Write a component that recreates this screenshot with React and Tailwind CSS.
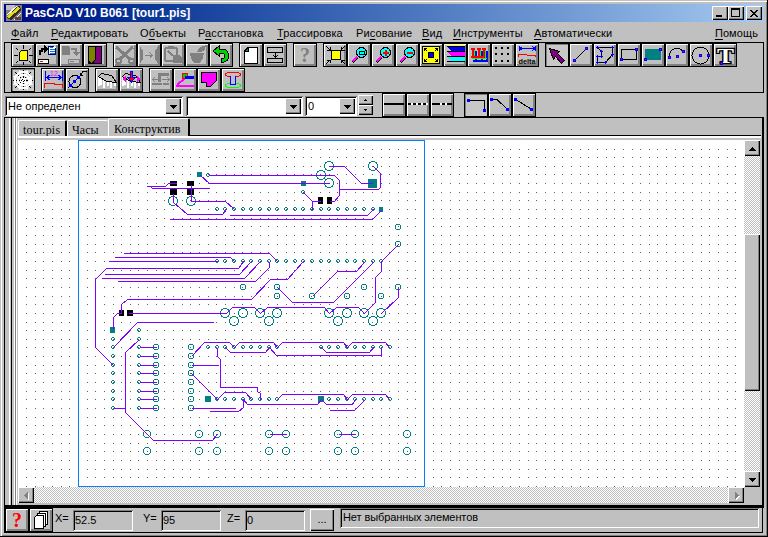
import React from "react";

const raised =
  "bg-[#c0c0c0] shadow-[inset_1px_1px_0_#fff,inset_-1px_-1px_0_#000,inset_-2px_-2px_0_#808080]";
const sunken =
  "shadow-[inset_1px_1px_0_#808080,inset_-1px_-1px_0_#fff,inset_2px_2px_0_#000]";

const K = "#000";
const G = "#808080";
const B = "#0000ff";

function Tool({ children, down }) {
  return (
    <div
      className={
        down
          ? "h-6 w-6 shrink-0 border border-black bg-[#c8c8c8] shadow-[inset_1px_1px_0_#808080]"
          : "h-6 w-6 shrink-0 border border-black bg-[#c0c0c0] shadow-[inset_1px_1px_0_#fff,inset_-1px_-1px_0_#808080,inset_-2px_-2px_0_#808080]"
      }
    >
      <svg width="22" height="22" viewBox="1 1 22 22" fill="none" stroke={K} shapeRendering="crispEdges" className="block overflow-visible">
        {children}
      </svg>
    </div>
  );
}

const Node = ({ x, y, red }) => (
  <g stroke="none">
    <rect x={x - 1} y={y - 1} width="3" height="3" fill={B} />
    {red && <rect x={x} y={y} width="1" height="1" fill="#f00" />}
  </g>
);

const Lens = ({ children }) => (
  <g>
    <path d="M5.5 19L10.5 14" stroke={K} strokeWidth="3.5" />
    <path d="M5.5 18.5L10 14" stroke="#f0f" strokeWidth="2" />
    <circle cx="14.5" cy="9.5" r="5" fill="#0ff" />
    {children}
  </g>
);

const fileTools = [
  <g>
    <path d="M12.5 2V6M12.5 19V22M3 12.5H7M18 12.5H22M5 5L7 7M20 5L18 7M5 20L7 18M20 20L18 18" />
    <path d="M10.5 7.5H16.5V17.5H8.5V9.5Z" fill="#ff0" />
  </g>,
  <g>
    <path d="M5 12V8H7V6H10" strokeWidth="2" />
    <path d="M9 2L13 6L9 10Z" fill={K} stroke="none" />
    <path d="M13 3H19L21 5V12H13Z" fill="#fff" stroke="none" />
    <path d="M15 4.5H18M15 6.5H20M15 8.5H20M15 10.5H20" stroke="#0080c0" />
    <path d="M13.5 3V12M20.5 5V12M13 11.5H21M13 3.5H19" stroke="#000080" />
    <rect x="3.5" y="16.5" width="10" height="4" fill="#fff" />
    <path d="M5 18.5H8" stroke="#f00" />
  </g>,
  <g stroke={G}>
    <path d="M3 3H9L11 5V12H3Z" fill={G} stroke="none" />
    <path d="M12 6H17V10" strokeWidth="2" />
    <path d="M13 9H21L17 13Z" fill={G} stroke="none" />
    <rect x="9.5" y="16.5" width="11" height="4" />
    <path d="M11 18.5H15" />
  </g>,
  <g>
    <path d="M5.5 20.5V3.5H18.5V20.5Z" fill="#800080" />
    <path d="M5.5 3.5H12.5V16L9 21L5.5 18Z" fill="#808000" />
  </g>,
];

const editTools = [
  <g stroke={G} strokeWidth="2">
    <path d="M3 4L17 16M20 4L7 16" strokeWidth="3" />
    <ellipse cx="5.5" cy="18" rx="2.5" ry="2" />
    <ellipse cx="18.5" cy="18" rx="2.5" ry="2" />
  </g>,
  <g stroke={G} fill={G}>
    <path d="M3 4Q9 12 3 20ZM21 4Q15 12 21 20Z" />
    <path d="M8 12.5H15M12.5 9.5L15 12.5L12.5 15.5" fill="none" />
  </g>,
  <g stroke={G} strokeWidth="2">
    <rect x="4" y="5" width="12" height="13" rx="2" />
    <path d="M7 4H13" strokeWidth="3" />
    <path d="M7 8L12 13" strokeWidth="1.5" />
    <path d="M12 12H18L21 15V20H12Z" fill={G} stroke="none" />
  </g>,
  <g fill={G} stroke="none">
    <path d="M5 10H19L18 15L15 20H9L6 15ZM12 9L14 5L21 2L20 7L16 9Z" />
  </g>,
  <g>
    <path d="M4 8L10 3V6H15Q20 8 20 14Q19 18 15 19H12V16Q16 16 16 12Q15 10 10 10V13Z" fill="#00d000" />
  </g>,
];

const pageTools = [
  <g>
    <path d="M9 4.5H18.500V20.500H5.500V8Z" fill="#fff" />
    <path d="M5.500 8.500L9.500 4.500V8.500Z" fill="#008080" />
  </g>,
  <g>
    <rect x="4.5" y="4.5" width="15" height="5" />
    <rect x="4.5" y="15.5" width="15" height="4" />
    <path d="M12.5 9V15M10.5 12.5L12.5 14.5L14.5 12.5" />
  </g>,
];

const viewTools = [
  <g>
    <path d="M3 3L7 7M22 3L18 7M3 21L7 17M22 21L18 17M7.5 4V7.5H4M18.5 4V7.5H22M7.5 20V17.5H4M18.5 20V17.5H22" />
    <rect x="8.5" y="7.5" width="9" height="9" fill="#ff0" />
  </g>,
  <Lens>
    <rect x="12.5" y="8.5" width="5" height="3" />
  </Lens>,
  <Lens>
    <path d="M12 10H18M15 7V13" stroke="#f00" strokeWidth="2" />
  </Lens>,
  <Lens>
    <path d="M12 10H18" stroke="#f00" strokeWidth="2" />
  </Lens>,
  <g>
    <rect x="3.5" y="3.5" width="17" height="17" fill="#ff0" />
    <path d="M5 5L8 8M19 5L16 8M5 19L8 16M19 19L16 16M5.5 8V5.5H8M16 5.5H18.5V8M5.5 16V18.5H8M16 18.5H18.5V16" />
    <circle cx="12" cy="12" r="3" fill={B} />
  </g>,
  <g stroke="none">
    <path d="M4 2H22V3H4Z" fill="#ff0" />
    <path d="M5 4H22V8H8Z" fill={B} />
    <path d="M5 9H22V13H8Z" fill="#f0f" />
    <path d="M5 14H22V18H8Z" fill="#0ff" />
    <path d="M4 3H22V4H4ZM4 8H22V9H4ZM4 13H22V14H4ZM4 18H22V19H4Z" fill={K} />
  </g>,
  <g>
    <path d="M6 18H21M9 8V18M15 8V18M20 8V18" stroke={B} strokeWidth="2" />
    <path d="M5 15.5H20M7.5 6V16M13.5 6V16M18.5 6V16" stroke="#0f0" />
    <path d="M4 6H8M10 6H14M15 6H19M4 14H18M6 6V14M12 6V14M17 6V14" stroke="#f00" strokeWidth="2" />
  </g>,
  <path d="M4 5H22M4 11H22M4 18H22" strokeDasharray="1.500 4.500" strokeWidth="2" />,
  <g>
    <path d="M4.500 3V8M20.500 3V8M4 5.500H21M7.500 3.500L5 5.500L7.500 7.500M17.500 3.500L20 5.500L17.500 7.500" stroke={B} />
    <path d="M3.500 14V11.500H11L13 12.500H20.500V14" stroke="#f00" />
    <text x="3.500" y="21" fontSize="8" fontWeight="bold" fontFamily="Liberation Sans, sans-serif" textLength="17" lengthAdjust="spacingAndGlyphs" fill={K} stroke="none">delta</text>
  </g>,
];

const drawTools = [
  <path d="M4.5 5.5L14.5 8.5L12.5 10.5L19.5 17.5L16.5 20.5L10.5 13.5L8.5 16.5Z" fill="#800080" />,
  <g>
    <path d="M5.5 17.5L17.5 5.5" />
    <Node x={5} y={17} red /><Node x={17} y={5} red />
  </g>,
  <g>
    <path d="M4.5 4.5H19.5V11.5L12.5 19.5H4.5V13.5H8.5V8.5L4.5 4.5" />
    <path d="M3 4.5H7M4.5 3V6M18 4.5H21M19.5 3V6M19.5 10V14M18 11.500H21M12.5 18V21M11 19.500H14M3 19.500H6M4.5 18V21M3 13.500H6M4.500 12V15M8.5 12V15M7 13.500H10M7 8.500H10M8.500 7V10" stroke={B} />
  </g>,
  <g>
    <rect x="4.5" y="6.5" width="15" height="10" />
    <Node x={4} y={16} red /><Node x={19} y={6} red />
  </g>,
  <g>
    <rect x="4" y="6" width="16" height="11" fill="#008080" stroke="none" />
    <Node x={4} y={16} red /><Node x={19} y={6} red />
  </g>,
  <g>
    <path d="M4.5 13C5 4 15 3 18 9" />
    <Node x={4} y={14} red /><Node x={12} y={13} red /><Node x={18} y={8} red />
  </g>,
  <g>
    <circle cx="11.5" cy="12.5" r="8.5" />
    <Node x={11} y={12} red /><Node x={19} y={12} red />
  </g>,
  <g>
    <text x="12.500" y="20" textAnchor="middle" fontSize="20" fontWeight="bold" fontFamily="Liberation Serif, serif" fill="#fff" stroke={K} strokeWidth="2.400" paintOrder="stroke" textLength="17" lengthAdjust="spacingAndGlyphs">T</text>
    <Node x={8} y={20} red />
  </g>,
];

const dimTools = [
  <g>
    <path d="M4.5 3V13M21.5 3V13M5 9.5H21M8.5 7L6 9.5L8.5 12M17.5 7L20 9.5L17.5 12" stroke={B} />
    <path d="M3.500 20V15.500H12L15 16.500H21.500V20" stroke="#f00" />
    <text x="9" y="8" fontSize="7" fontFamily="Liberation Sans, sans-serif" fill="#f0f" stroke="none">12</text>
  </g>,
  <g>
    <circle cx="10" cy="13.500" r="6" />
    <path d="M3 20L16 7L17.500 3.500H22M15.500 8V5M15 7.500H18" />
    <Node x={9} y={13} /><Node x={13} y={9} /><Node x={5} y={17} />
  </g>,
];

const Slab = () => (
  <g>
    <path d="M3.500 9V18M5.500 10V17M8.500 12V20M12.500 14V18M15.500 14V20M19.500 15V18" stroke="#fff" strokeWidth="2" />
    <path d="M3.500 8.500L6.500 5.500L16.500 7.500L21.500 14.500L11.500 13.500Z" fill="#c0c0c0" />
  </g>
);

const copperTools = [
  <Slab />,
  <g>
    <Slab />
    <path d="M3 11L7 8V14ZM22 11L18 8V14Z" fill="#f0f" stroke="none" />
    <path d="M11.500 3.500H13.500V9.500H16L12.500 14L9 9.500H11.500Z" fill="#f00" stroke={B} />
  </g>,
];

const routeTools = [
  <g stroke={G}>
    <path d="M10.500 14V6H20" strokeWidth="3" />
    <path d="M3 11.500H9M6 9L3.500 11.500L6 14M13 11.500H20M18 9L20.500 11.500L18 14" />
    <path d="M3 16H13M14 16H20" strokeWidth="2" />
  </g>,
  <g>
    <path d="M3 18H21M4 17L12 10" stroke="#f0f" strokeWidth="2" />
    <circle cx="12" cy="8" r="3" fill="#0c0" stroke="#f00" />
    <path d="M12 9.500H21" stroke={B} strokeWidth="3" />
  </g>,
  <path d="M4.500 4.500H19.500V12.500L13.500 18.500H9.500V14.500H4.500Z" fill="#f0f" />,
  <g>
    <ellipse cx="12" cy="6.500" rx="7.500" ry="2.500" stroke="#f00" />
    <ellipse cx="12" cy="17.500" rx="7.500" ry="2.500" stroke="#0f0" />
    <path d="M9.500 8V16.500H14.500V8" stroke={B} fill="#c0c0c0" />
  </g>,
];

const Web = () => (
  <g>
    <path d="M4 4L20 20M20 4L4 20M12.500 2V22M2 12.500H22" />
    <path d="M9 4L16 4L20 9V15L16 20H9L4 15V9Z" stroke="#fff" strokeWidth="1.500" />
    <path d="M10 7H15L18 10V14L15 17H10L7 14V10Z" stroke="#fff" strokeWidth="1.500" />
    <circle cx="12.500" cy="12.500" r="2.500" stroke="#fff" />
    <path d="M8 2L17 22M17 2L8 22M2 8L22 17M2 17L22 8" stroke="#fff" strokeWidth=".8" />
  </g>
);

function Group({ items, downAt = -1 }) {
  return (
    <div className="flex">
      {items.map((it, i) => (
        <Tool key={i} down={i === downAt}>{it}</Tool>
      ))}
    </div>
  );
}

const arrows = {
  up: "M3 2h1v1h1v1h1v1h1v1H0v-1h1v-1h1v-1h1z",
  down: "M0 2h7v1h-1v1h-1v1h-1v1h-1v-1h-1v-1h-1v-1h-1z",
  left: "M5 0v7h-1v-1h-1v-1h-1v-1h-1v-1h1v-1h1v-1h1v-1z",
  right: "M2 0v7h1v-1h1v-1h1v-1h1v-1h-1v-1h-1v-1h-1v-1z",
};

function Arrow({ dir, gray }) {
  return (
    <svg width="7" height="7" viewBox="0 0 7 7" shapeRendering="crispEdges" className="block overflow-visible">
      {gray && <path d={arrows[dir]} fill="#fff" transform="translate(1 1)" />}
      <path d={arrows[dir]} fill={gray ? G : K} />
    </svg>
  );
}

const Spin = ({ d }) => (
  <div className={"flex h-[10px] items-center justify-center " + raised}>
    <svg width="3" height="2" viewBox="0 0 3 2" shapeRendering="crispEdges"><path d={d} /></svg>
  </div>
);

function Combo({ className, text }) {
  return (
    <div className={"flex h-[20px] items-center bg-white p-[2px] " + sunken + " " + className}>
      <span className="grow pl-px text-[11px] leading-4 tracking-[0.05px]">{text}</span>
      <span className={"flex h-4 w-4 items-center justify-center " + raised}><Arrow dir="down" /></span>
    </div>
  );
}

const menus = [
  ["", "Ф", "айл", "w-[40px]"],
  ["", "Р", "едактировать", "w-[89px]"],
  ["О", "б", "ъекты", "w-[58px]"],
  ["Р", "а", "сстановка", "w-[79px]"],
  ["", "Т", "рассировка", "w-[79px]"],
  ["Ри", "с", "ование", "w-[66px]"],
  ["", "В", "ид", "w-[31px]"],
  ["", "И", "нструменты", "w-[81px]"],
  ["", "А", "втоматически", "w-[90px]"],
];

const traces = `
146,186 165,186 168,183 176,183|150,186 152,188 209,188|208,175 334,175 339,180 339,195 334,201 329,201
200,175 209,183 329,183|329,166 344,166 361,183 372,183|373,166 380,173 380,187 378,189 339,189
303,192 312,201 320,201|312,201 312,209|173,193 173,202 187,214 222,214 226,209|191,184 191,201 225,201 234,209
229,215 367,215 373,209|169,219 372,219 381,210|123,253 269,253 277,261|114,257 230,257 234,261|108,261 217,261
243,261 238,268 106,268 95,279 95,347 113,365|251,261 239,274 104,274|260,261 244,278 101,278
117,281 255,281 269,267 269,261|121,313 121,304 127,299 251,299 270,279 287,279 303,261
128,313 226,313 232,307 254,307 260,313 267,307 324,307 329,313 336,307 358,307 364,313 375,302 375,277 381,271 381,261 398,244
312,296 337,271 356,271 364,262|277,287 292,302 333,302 373,262|398,287 398,297 381,313
113,328 113,317 117,313 121,313|113,347 137,322 213,322|139,339 125,352 125,412 153,440 212,440 217,434|113,408 125,408
191,356 204,342 229,342 234,347 239,342 273,342 277,347 282,342 343,342 347,347 352,342 385,342 389,347
225,347 230,352 265,352 269,347 276,355 381,355 381,347|321,347 326,352 369,352 373,347
217,347 217,356 220,359 220,387 257,387 257,391 260,393 260,399|191,365 218,365|191,373 217,399 224,392 245,392 251,399
191,408 235,408|209,411 238,411 243,407 243,399 247,404 317,404 321,399 326,404 352,404 355,399
329,410 354,410 364,400|277,399 282,394 343,394 347,399 352,394 385,394 389,399|269,434 286,434|338,434 355,434`
  .trim()
  .split(/[|\n]/);

const X0 = 87.07;
const PITCH = 8.65;
const col = (k) => Math.round(X0 + PITCH * k);
const span = (a, b) => Array.from({ length: b - a + 1 }, (_, i) => a + i);
const leftRows = [347, 356, 365, 373, 382, 391, 399, 408];

const smallPads = [
  [208, 175], [303, 192],
  ...span(15, 33).map((k) => [col(k), 209]),
  ...span(15, 34).map((k) => [col(k), 261]),
  ...[...span(14, 22), ...span(27, 35)].map((k) => [col(k), 347]),
  ...[...span(15, 22), ...span(28, 35)].map((k) => [col(k), 399]),
  ...[339, ...leftRows].map((y) => [113, y]),
  ...[330, 339, ...leftRows].map((y) => [139, y]),
];
const midPads = [
  [398, 227], [398, 244], [243, 287], [277, 287], [277, 296], [312, 296], [347, 296], [364, 287], [381, 296], [398, 287],
  ...leftRows.map((y) => [156, y]),
  ...leftRows.map((y) => [191, y]),
];
const bigPads = [
  [173, 201], [191, 201], [329, 166], [321, 175], [329, 183], [373, 166],
  [225, 313], [234, 321], [243, 313], [260, 313], [269, 321], [277, 313],
  [329, 313], [338, 321], [347, 313], [364, 313], [373, 321], [381, 313],
];
const rowPads = [147, 199, 217, 269, 286, 338, 355, 407].flatMap((x) => [[x, 434], [x, 451]]);

// Pixel rings, one for each pad size, drawn from the ring's top left corner.
const ring4 = "m1 0h2v1h-2zm-1 1h1v2h-1zm3 0h1v2h-1zm-2 2h2v1h-2z";
const ring6 = "m1 0h4v1h-4zm-1 1h1v4h-1zm5 0h1v4h-1zm-4 4h4v1h-4z";
const ring8 = "m2 0h4v1h-4zm-1 1h1v1h-1zm5 0h1v1h-1zm-6 1h1v4h-1zm7 0h1v4h-1zm-6 4h1v1h-1zm5 0h1v1h-1zm-4 1h4v1h-4z";
const ring10 =
  "m3 0h4v1h-4zm-2 1h2v1h-2zm6 0h2v1h-2zm-6 1h1v1h-1zm7 0h1v1h-1zm-8 1h1v4h-1zm9 0h1v4h-1zm-8 4h1v1h-1zm7 0h1v1h-1zm-7 1h2v1h-2zm6 0h2v1h-2zm-4 1h4v1h-4z";
const rings = (list, half, shape) => list.map(([x, y]) => `M${x - half} ${y - half}${shape}`).join("");

const gridDots = span(-7, 75)
  .flatMap((i) => span(0, 39).map((j) => `M${Math.floor(X0 + PITCH * i)} ${Math.floor(149.02 + PITCH * j)}h1v1h-1z`))
  .join("");

function Board() {
  return (
    <svg width="726" height="347" viewBox="18 140 726 347" shapeRendering="crispEdges" className="block bg-white">
      <path d={gridDots} fill="#606060" />
      <path d="M170 181h7v5h-7zM170 189h7v6h-7zM187 181h7v5h-7zM187 189h7v6h-7zM318 197h5v7h-5zM327 197h5v7h-5zM119 310h5v6h-5zM127 310h6v6h-6z" fill={K} />
      <g fill="#008080">
        <path d="M197 172h5v5h-5zM301 181h5v5h-5zM368 179h9v9h-9zM379 207h4v5h-4zM110 327h5v6h-5zM205 396h6v6h-6zM318 396h6v6h-6z" />
        <path d={rings(smallPads, 2, ring4)} />
        <path d={rings(midPads, 3, ring6)} />
        <path d={rings(bigPads, 5, ring10)} />
        <path d={rings(rowPads, 4, ring8)} />
      </g>
      <g fill="none" stroke="#8000ff" transform="translate(.5 .5)">
        {traces.map((p, i) => <polyline key={i} points={p} />)}
        {leftRows.map((y) => <path key={y} d={`M139 ${y}H156`} />)}
      </g>
      <rect x="78.5" y="140.5" width="346" height="346" fill="none" stroke="#0080ff" />
    </svg>
  );
}

const checker = "bg-[repeating-conic-gradient(#c0c0c0_0_25%,#fff_0_50%)] bg-[length:2px_2px]";

function Field({ label, value, gap }) {
  return (
    <div className={"flex " + gap}>
      <span className="w-[18px] pt-[3px] text-[11px] leading-[14px]">{label}</span>
      <span className={"mt-[2px] h-[21px] w-[60px] pl-[2px] pt-[3px] text-[11px] leading-[14px] " + sunken}>{value}</span>
    </div>
  );
}

export default function App() {
  return (
    <div className="flex h-[537px] w-[768px] flex-col overflow-hidden bg-[#c0c0c0] px-1 pt-1 font-['Liberation_Sans',Arial,sans-serif] text-black shadow-[inset_-1px_-1px_0_#000,inset_1px_1px_0_#c0c0c0,inset_2px_2px_0_#fff,inset_-2px_-2px_0_#808080]">
      <div className="flex h-[18px] shrink-0 items-center bg-linear-to-r from-[#000080] to-[#a6caf0] pl-[2px] pr-[2px]">
        <svg width="16" height="16" viewBox="0 0 16 16" shapeRendering="crispEdges">
          <path d="M0 0H16V16H0Z" fill="#808080" />
          <path d="M0 0H9V5H0ZM3 8H8V13H3Z" fill="#c0c0c0" />
          <path d="M0 12L10 2L14 1L15 5L5 15Z" fill="#303020" />
          <path d="M0 12L12 2L14 4L3 13Z" fill="#e8d820" />
          <path d="M1 10L11 1M8 15L15 8" stroke="#fff" />
          <path d="M9 12H15V15H9Z" fill="#604040" />
        </svg>
        <span className="ml-[3px] grow whitespace-nowrap text-[12px] font-bold leading-[18px] tracking-[-0.03px] text-white">PasCAD V10 B061 [tour1.pis]</span>
        <div className={"h-[14px] w-4 pl-[4px] pt-[9px] " + raised}><div className="h-[2px] w-[6px] bg-black" /></div>
        <div className={"h-[14px] w-4 pl-[3px] pt-[2px] " + raised}><div className="h-[9px] w-[9px] border border-t-2 border-black" /></div>
        <div className={"ml-[2px] flex h-[14px] w-4 items-center justify-center " + raised}>
          <svg width="8" height="7" viewBox="0 0 8 7" shapeRendering="crispEdges"><path d="M.5 0L7.5 7M7.5 0L.5 7" stroke={K} strokeWidth="1.7" /></svg>
        </div>
      </div>

      <div className="flex h-5 shrink-0 items-center pl-[7px] pt-px text-[11px] leading-5">
        {menus.map(([a, u, b, w]) => (
          <span key={u + b} className={"shrink-0 whitespace-nowrap tracking-[0.1px] " + w}>{a}<u className="underline-offset-2">{u}</u>{b}</span>
        ))}
        <span className="ml-auto pr-[6px] tracking-[0.1px]"><u className="underline-offset-2">П</u>омощь</span>
      </div>

      <div className="flex h-[51px] shrink-0 flex-col gap-px border border-black pl-[6px]">
        <div className="flex gap-[6px]">
          <Group items={fileTools} />
          <Group items={editTools} />
          <Group items={pageTools} />
          <Tool><text x="12" y="19" textAnchor="middle" fontSize="20" fontWeight="bold" fontFamily="Liberation Serif, serif" fill={G} stroke="none">?</text></Tool>
          <Group items={viewTools} />
          <Group items={drawTools} downAt={0} />
        </div>
        <div className="flex gap-[6px]">
          <Group items={[<Web />]} downAt={0} />
          <Group items={dimTools} />
          <Group items={copperTools} />
          <Group items={routeTools} />
        </div>
      </div>

      <div className="flex h-6 shrink-0 pl-px">
        <Combo className="mt-[3px] w-[178px]" text="Не определен" />
        <Combo className="ml-[3px] mt-[3px] w-[117px]" text="" />
        <Combo className="ml-[2px] mt-[3px] w-[52px]" text="0" />
        <div className="ml-px mt-[2px] flex w-[15px] flex-col">
          <Spin d="M1 0h1v1h1v1H0v-1h1z" />
          <Spin d="M0 0h3v1h-1v1h-1v-1H0z" />
        </div>
        <div className="ml-[9px] flex">
          <Tool><path d="M2 11H22" strokeWidth="2" /></Tool>
          <Tool><path d="M2 11H22" strokeWidth="2" stroke="#fff" /><path d="M2 11H22" strokeWidth="2" strokeDasharray="3 2" /></Tool>
          <Tool><path d="M2 11H22" strokeWidth="2" /><path d="M10 11H12M15 11H17" strokeWidth="2" stroke="#fff" /></Tool>
        </div>
        <div className="ml-[10px] flex">
          <Tool down><path d="M3 7.5H20.5V17" /><Node x={4} y={7} /><Node x={20} y={17} /></Tool>
          <Tool><path d="M3 6.5H9L19 16" /><Node x={3} y={6} /><Node x={19} y={16} /></Tool>
          <Tool><path d="M3 6L19 16" /><Node x={3} y={6} /><Node x={19} y={16} /></Tool>
        </div>
      </div>

      <div className="flex h-[391px] shrink-0 border-b-[3px] border-t border-black">
        <div className="w-[14px] shrink-0 border-l border-black bg-[linear-gradient(to_right,#c0c0c0_0_4px,#fff_4px_5px,#c0c0c0_5px_6px,#000_6px_7px,#c0c0c0_7px_9px,#fff_9px_10px,#808080_10px_11px,#fff_11px_12px,#c0c0c0_12px)]" />
        <div className="flex grow flex-col">
          <div className="flex h-[18px] items-end font-['Liberation_Serif','Times_New_Roman',serif] text-[12px] leading-[14px]">
            <div className="h-[16px] w-[49px] rounded-t-[2px] border-l border-r-2 border-t border-l-white border-r-black border-t-white pl-[4px] pt-[2px] tracking-[0.2px]">tour.pis</div>
            <div className="h-[16px] w-[41px] rounded-t-[2px] border-l border-t border-white pl-[4px] pt-[2px]">Часы</div>
            <div className="h-[18px] w-[82px] rounded-t-[2px] border-l border-r-2 border-t border-l-white border-r-black border-t-white pl-[5px] pt-[3px] tracking-[0.1px]">Конструктив</div>
            <div className="h-px grow bg-black" />
          </div>
          <div className="h-[4px] border-t-2 border-white" />
          <div className="flex">
            <div className="w-[726px]">
              <Board />
              <div className={"flex h-4 justify-between " + checker}>
                <div className={"flex h-4 w-4 items-center justify-center " + raised}><Arrow dir="left" gray /></div>
                <div className={"flex h-4 w-4 items-center justify-center " + raised}><Arrow dir="right" gray /></div>
              </div>
            </div>
            <div className="w-4">
              <div className={"flex h-[347px] flex-col " + checker}>
                <div className={"flex h-4 items-center justify-center " + raised}><Arrow dir="up" /></div>
                <div className={"mt-[78px] h-[157px] " + raised} />
                <div className={"mt-auto flex h-4 items-center justify-center " + raised}><Arrow dir="down" /></div>
              </div>
            </div>
          </div>
        </div>
        <div className="w-[3px] border-r-2 border-black" />
      </div>

      <div className="mr-px flex h-[25px] shrink-0 border-b border-l border-r border-black">
        <Tool><text x="12" y="19" textAnchor="middle" fontSize="20" fontWeight="bold" fontFamily="Liberation Serif, serif" fill="#f00" stroke="none">?</text></Tool>
        <Tool>
          <path d="M10.5 3.5H18.5V16.5H10.5Z" fill="#fff" />
          <path d="M8.5 5.5H16.5V18.5H8.5Z" fill="#fff" />
          <path d="M7.5 7.5H14.5V20.5H5.5V9.5Z" fill="#fff" />
        </Tool>
        <Field label="X=" value="52.5" gap="ml-[2px]" />
        <Field label="Y=" value="95" gap="ml-[10px]" />
        <Field label="Z=" value="0" gap="ml-[6px]" />
        <div className={"ml-[5px] mt-px h-[22px] w-6 text-center text-[11px] leading-[20px] " + raised}>...</div>
        <div className={"ml-[6px] h-[20px] w-[419px] pl-[3px] pt-[2px] text-[11px] leading-[14px] tracking-[-0.1px] " + sunken}>Нет выбранных элементов</div>
      </div>
    </div>
  );
}
